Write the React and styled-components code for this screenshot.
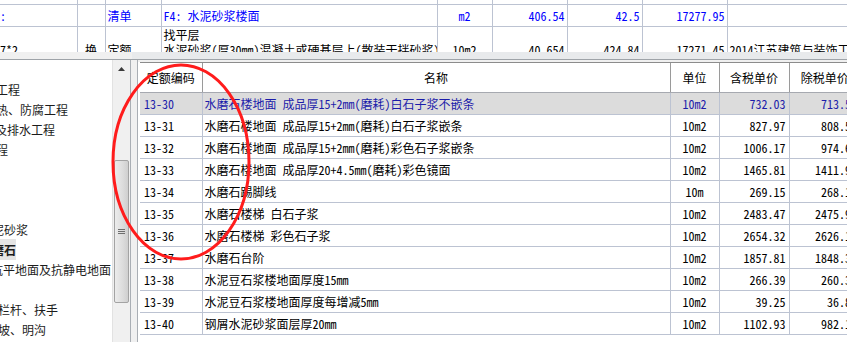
import React from 'react';
import styled, { createGlobalStyle } from 'styled-components';

const FONT = `"Noto Sans Mono CJK SC", "Noto Sans CJK SC", "Liberation Mono", monospace`;

const GlobalStyle = createGlobalStyle`
    html, body {
        margin: 0;
        padding: 0;
        background: #f0f0f0;
    }
    body {
        font-family: ${FONT};
        font-size: 12px;
        color: #000;
    }
`;

const Page = styled.div`
    position: relative;
    width: 847px;
    height: 342px;
    overflow: hidden;
    display: flex;
    flex-direction: column;
    background: #f0f0f0;
`;

/* ---------- top grid (清单 / 定额 list) ---------- */
const TopWrap = styled.div`
    height: 52px;
    overflow: hidden;
    background: #fff;
    flex-shrink: 0;
`;
const TopTable = styled.table`
    border-collapse: collapse;
    table-layout: fixed;
    width: 880px;
    td {
        border: 1px solid #bcc3d2;
        padding: 0 2px;
        white-space: nowrap;
        overflow: hidden;
        line-height: 15px;
    }
    tr:first-child td {
        border-top: none;
    }
    td:first-child {
        border-left: none;
        padding-left: 0;
    }
`;
const TopRow = styled.tr`
    height: ${p => p.$h}px;
    color: ${p => (p.$blue ? '#0000ff' : '#000')};
`;
const TopCell = styled.td`
    text-align: ${p => p.$align || 'left'};
    vertical-align: middle;
`;

const Splitter = styled.div`
    height: 7px;
    flex-shrink: 0;
    background: linear-gradient(90deg, #f0f0f0 0, #f0f0f0 132px, #e8eaec 132px);
    border-bottom: 1px solid #9ea3a8;
`;

/* ---------- bottom area ---------- */
const Bottom = styled.div`
    flex: 1;
    display: flex;
    min-height: 0;
`;

const TreePanel = styled.div`
    width: 130px;
    display: flex;
    background: #fff;
    border-right: 1px solid #a9aeb4;
    flex-shrink: 0;
`;
const TreeList = styled.div`
    width: 113px;
    padding-top: 20px;
    overflow: hidden;
`;
const TreeItem = styled.div`
    height: 20px;
    line-height: 20px;
    white-space: nowrap;
    font-family: "Noto Sans CJK SC", sans-serif;
    font-size: 12px;
    color: #1c1c1c;
    margin-left: ${p => p.$offset || 0}px;
    span {
        background: ${p => (p.$selected ? '#e4e4e4' : 'transparent')};
        font-weight: ${p => (p.$selected ? 700 : 400)};
        padding: 2px 0;
    }
`;

const ScrollTrack = styled.div`
    width: 17px;
    background: #f0f0f0;
    border-left: 1px solid #e2e2e2;
    display: flex;
    flex-direction: column;
    align-items: center;
`;
const ArrowBtn = styled.div`
    height: 17px;
    width: 100%;
    display: flex;
    align-items: center;
    justify-content: center;
`;
const Thumb = styled.div`
    margin-top: 83px;
    width: 15px;
    height: 143px;
    box-sizing: border-box;
    border: 1px solid #a3a3a3;
    border-radius: 2px;
    background: linear-gradient(90deg, #ececec, #dcdcdc 60%, #cfcfcf);
    display: flex;
    align-items: center;
    justify-content: center;
`;

const Gutter = styled.div`
    width: 6px;
    flex-shrink: 0;
    background: #f0f0f0;
    border-right: 1px solid #a9aeb4;
`;

const TablePanel = styled.div`
    flex: 1;
    margin-top: 2px;
    overflow: hidden;
    background: #fff;
    padding-left: 2px;
`;
const QuotaTable = styled.table`
    border-collapse: collapse;
    table-layout: fixed;
    width: 720px;
    th, td {
        white-space: nowrap;
        overflow: hidden;
        height: 21px;
        padding: 0;
    }
    th {
        height: 29px;
        font-weight: 400;
        text-align: center;
        border-top: 1px solid #8c8c8c;
        border-left: 1px solid #9a9a9a;
        border-bottom: 1px solid #a6a9b0;
        background: #fff;
    }
    th:first-child {
        border-left: none;
    }
    td {
        border-bottom: 1px solid #bcc3d2;
        border-left: 1px solid #bcc3d2;
    }
    td:first-child {
        border-left: none;
    }
`;
const DataRow = styled.tr`
    background: ${p => (p.$active ? '#dcdcdc' : '#fff')};
    color: ${p => (p.$active ? '#1c1caa' : '#000')};
`;
const Cell = styled.td`
    text-align: ${p => p.$align || 'left'};
    padding-left: ${p => p.$pl || 0}px !important;
    padding-right: ${p => p.$pr || 0}px !important;
`;

const Annotation = styled.svg`
    position: absolute;
    left: 0;
    top: 0;
    pointer-events: none;
`;

const treeItems = [
    { text: '工程', offset: -4 },
    { text: '热、防腐工程', offset: -4 },
    { text: '及排水工程', offset: -5 },
    { text: '程', offset: -4 },
    { text: '' },
    { text: '' },
    { text: '' },
    { text: '泥砂浆', offset: -8 },
    { text: '磨石', offset: -8, selected: true },
    { text: '坑平地面及抗静电地面', offset: -9 },
    { text: '' },
    { text: '栏杆、扶手', offset: -2 },
    { text: '坡、明沟', offset: -2 },
];

const rows = [
    ['13-30', '水磨石楼地面 成品厚15+2mm(磨耗)白石子浆不嵌条', '10m2', '732.03', '713.54'],
    ['13-31', '水磨石楼地面 成品厚15+2mm(磨耗)白石子浆嵌条', '10m2', '827.97', '808.55'],
    ['13-32', '水磨石楼地面 成品厚15+2mm(磨耗)彩色石子浆嵌条', '10m2', '1006.17', '974.66'],
    ['13-33', '水磨石楼地面 成品厚20+4.5mm(磨耗)彩色镜面', '10m2', '1465.81', '1411.93'],
    ['13-34', '水磨石踢脚线', '10m', '269.15', '268.12'],
    ['13-35', '水磨石楼梯 白石子浆', '10m2', '2483.47', '2475.93'],
    ['13-36', '水磨石楼梯 彩色石子浆', '10m2', '2654.32', '2626.16'],
    ['13-37', '水磨石台阶', '10m2', '1857.81', '1848.37'],
    ['13-38', '水泥豆石浆楼地面厚度15mm', '10m2', '266.39', '260.32'],
    ['13-39', '水泥豆石浆楼地面厚度每增减5mm', '10m2', '39.25', '36.85'],
    ['13-40', '钢屑水泥砂浆面层厚20mm', '10m2', '1102.93', '982.13'],
];

const App = () => {
    return (
        <Page>
            <GlobalStyle />
            <TopWrap>
                <TopTable>
                    <colgroup>
                        <col style={{ width: 77 }} />
                        <col style={{ width: 28 }} />
                        <col style={{ width: 56 }} />
                        <col style={{ width: 276 }} />
                        <col style={{ width: 55 }} />
                        <col style={{ width: 75 }} />
                        <col style={{ width: 75 }} />
                        <col style={{ width: 85 }} />
                        <col style={{ width: 153 }} />
                    </colgroup>
                    <tbody>
                        <TopRow $h={4}>
                            <TopCell /><TopCell /><TopCell /><TopCell /><TopCell />
                            <TopCell /><TopCell /><TopCell /><TopCell />
                        </TopRow>
                        <TopRow $h={22} $blue>
                            <TopCell>:</TopCell>
                            <TopCell />
                            <TopCell>清单</TopCell>
                            <TopCell>F4: 水泥砂浆楼面</TopCell>
                            <TopCell $align="center">m2</TopCell>
                            <TopCell $align="right">406.54</TopCell>
                            <TopCell $align="right">42.5</TopCell>
                            <TopCell $align="right">17277.95</TopCell>
                            <TopCell />
                        </TopRow>
                        <TopRow $h={44}>
                            <TopCell>7*2</TopCell>
                            <TopCell $align="center">换</TopCell>
                            <TopCell>定额</TopCell>
                            <TopCell>
                                找平层<br />
                                水泥砂浆(厚30mm)混凝土或硬基层上(散装干拌砂浆)<br />
                                &nbsp;
                            </TopCell>
                            <TopCell $align="center">10m2</TopCell>
                            <TopCell $align="right">40.654</TopCell>
                            <TopCell $align="right">424.84</TopCell>
                            <TopCell $align="right">17271.45</TopCell>
                            <TopCell>2014江苏建筑与装饰工程计价定额</TopCell>
                        </TopRow>
                    </tbody>
                </TopTable>
            </TopWrap>
            <Splitter />
            <Bottom>
                <TreePanel>
                    <TreeList>
                        {treeItems.map((item, i) => (
                            <TreeItem key={i} $selected={item.selected} $offset={item.offset}>
                                <span>{item.text}</span>
                            </TreeItem>
                        ))}
                    </TreeList>
                    <ScrollTrack>
                        <ArrowBtn>
                            <svg width="7" height="4" viewBox="0 0 7 4">
                                <path d="M0 4 L3.5 0 L7 4 Z" fill="#3a3a3a" />
                            </svg>
                        </ArrowBtn>
                        <Thumb>
                            <svg width="7" height="6" viewBox="0 0 7 6">
                                <path d="M0 0.5 H7 M0 2.5 H7 M0 4.5 H7" stroke="#6e6e6e" strokeWidth="1" />
                            </svg>
                        </Thumb>
                    </ScrollTrack>
                </TreePanel>
                <Gutter />
                <TablePanel>
                    <QuotaTable>
                        <colgroup>
                            <col style={{ width: 62 }} />
                            <col style={{ width: 468 }} />
                            <col style={{ width: 49 }} />
                            <col style={{ width: 70 }} />
                            <col style={{ width: 71 }} />
                        </colgroup>
                        <thead>
                            <tr>
                                <th>定额编码</th>
                                <th>名称</th>
                                <th>单位</th>
                                <th>含税单价</th>
                                <th>除税单价</th>
                            </tr>
                        </thead>
                        <tbody>
                            {rows.map((r, i) => (
                                <DataRow key={r[0]} $active={i === 0}>
                                    <Cell $pl={4}>{r[0]}</Cell>
                                    <Cell $pl={2}>{r[1]}</Cell>
                                    <Cell $align="center">{r[2]}</Cell>
                                    <Cell $align="right" $pr={3}>{r[3]}</Cell>
                                    <Cell $align="right" $pr={3}>{r[4]}</Cell>
                                </DataRow>
                            ))}
                        </tbody>
                    </QuotaTable>
                </TablePanel>
            </Bottom>
            <Annotation width="847" height="342" viewBox="0 0 847 342">
                <ellipse cx="181" cy="162" rx="68" ry="97" fill="none" stroke="#ff1c1c" strokeWidth="3" />
            </Annotation>
        </Page>
    );
};

export default App;
